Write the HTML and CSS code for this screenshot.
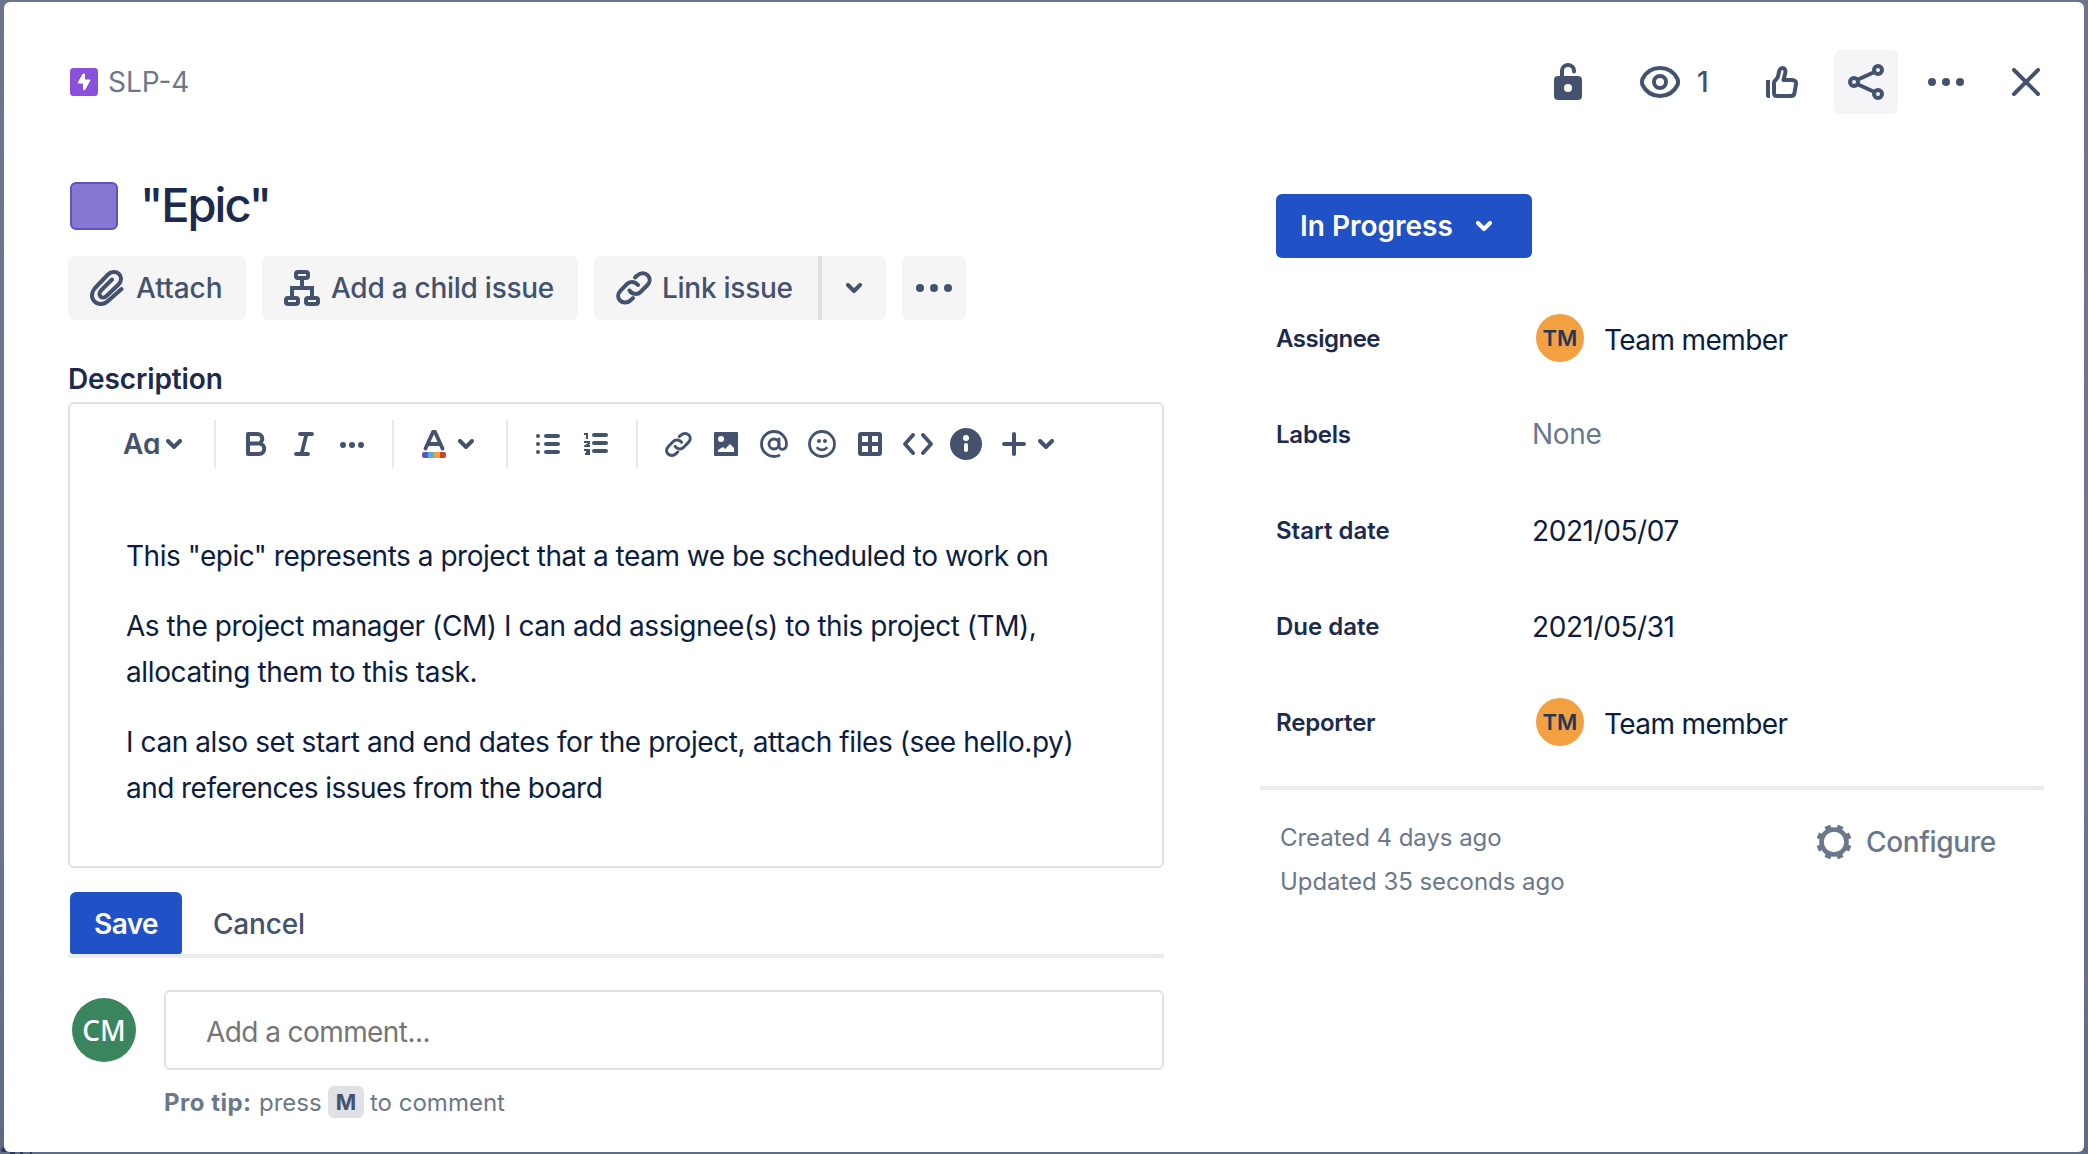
FILE: index.html
```html
<!DOCTYPE html>
<html lang="en">
<head>
<meta charset="utf-8">
<title>SLP-4</title>
<link rel="stylesheet" href="styles.css">
</head>
<body>
<svg width="0" height="0" class="sprite">
  <symbol id="chevron" viewBox="0 0 16 10"><path d="M2 2l6 6 6-6" fill="none" stroke="currentColor" stroke-width="4" stroke-linecap="round" stroke-linejoin="round"/></symbol>
  <symbol id="dots" viewBox="0 0 36 8"><g fill="currentColor"><circle cx="4" cy="4" r="4"/><circle cx="18" cy="4" r="4"/><circle cx="32" cy="4" r="4"/></g></symbol>
  <symbol id="link" viewBox="0 0 36 34"><g fill="none" stroke="currentColor" stroke-width="4" stroke-linecap="round" stroke-linejoin="round"><path d="M13.500 19.500c2.800 4 8 4.500 11 1.500l6.500-6.500c3.400-3.400 3.400-7.500.8-10.200s-7.500-2.800-10.300 0L19 6.500"/><path d="M22 14c-3-3.500-8-4-11-1l-6.200 6.300c-3.400 3.400-3.400 7.500-.8 10.200s7.500 2.800 10.300 0L17 27"/></g></symbol>
</svg>
<svg class="behind" width="36" height="8" viewBox="0 0 36 8"><path d="M1 5c0-4 4-5 6-2l-1 3H3zM10 8V6h5v2zM20 8V6h3v2zM30 6h2v2h-2z" fill="#2b3a5c"/></svg>
<main class="dialog">
  <header class="topbar">
    <div class="crumb">
      <svg width="28" height="28" viewBox="0 0 28 28"><rect width="28" height="28" rx="3.500" fill="#8a50dc"/><path d="M13 6L8 15h5.500v7l1.500-.6L20 12h-5.500V6z" fill="#fff" stroke="#fff" stroke-linejoin="round"/></svg>
      <span class="key">SLP-4</span>
    </div>
    <div class="tools">
      <svg class="lock" width="28" height="38" viewBox="0 0 28 38"><path d="M8 16V9a6 6 0 0 1 12 0v.5" fill="none" stroke="currentColor" stroke-width="4" stroke-linecap="round"/><path fill-rule="evenodd" fill="currentColor" d="M4 14h20a4 4 0 0 1 4 4v16a4 4 0 0 1-4 4H4a4 4 0 0 1-4-4V18a4 4 0 0 1 4-4zm10 8a4 4 0 1 0 0 8 4 4 0 0 0 0-8z"/></svg>
      <svg class="eye" width="40" height="32" viewBox="0 0 40 32"><g fill="none" stroke="currentColor" stroke-width="4"><path d="M20 2c8 0 14 4 17.500 11 .7 2 .7 4 0 6C34 26 28 30 20 30S6 26 2.500 19c-.7-2-.7-4 0-6C6 6 12 2 20 2z"/><circle cx="20" cy="16" r="6"/></g></svg>
      <span class="watchers">1</span>
      <svg class="thumb" width="32" height="32" viewBox="0 0 32 32"><path d="M0 14h4v18H2.500A2.500 2.500 0 0 1 0 29.500z" fill="currentColor"/><path d="M8 16.500c0-1.500 4-3.500 4.500-8C13 4 14 2 16.500 2S20 4.500 19 8l-1.500 6H26c3 0 4.300 1.500 4 4l-1.500 9c-.4 2-1.500 3-3.500 3H11c-2 0-3-1-3-3z" fill="none" stroke="currentColor" stroke-width="4" stroke-linejoin="round"/></svg>
      <div class="share"><svg width="36" height="36" viewBox="0 0 36 36"><g fill="none" stroke="currentColor" stroke-width="4"><circle cx="6" cy="18" r="4"/><circle cx="30" cy="6" r="4"/><circle cx="30" cy="30" r="4"/><path d="M9 16L26.500 8M9 20l17.500 8"/></g></svg></div>
      <svg class="more" width="36" height="8"><use href="#dots"/></svg>
      <svg class="close" width="28" height="28" viewBox="0 0 28 28"><path d="M2 2l24 24M26 2L2 26" stroke="currentColor" stroke-width="4" stroke-linecap="round"/></svg>
    </div>
  </header>
  <div class="columns">
    <section class="left">
      <div class="title-row"><span class="swatch"></span><h1>"Epic"</h1></div>
      <div class="actions">
        <div class="btn attach"><svg width="34" height="36" viewBox="0 0 34 36"><path d="M31.500 19L18 31c-4 4-10 4-13.500.5s-3.500-9 .5-13.500L18 4.500c3-3 8-3.300 11-.5s2.500 7.500-.5 10.500L16.500 26c-1.800 1.800-4.500 2-6 .5s-1.300-4 .5-6L22 9.500" fill="none" stroke="currentColor" stroke-width="4" stroke-linecap="round" stroke-linejoin="round"/></svg><span>Attach</span></div>
        <div class="btn child"><svg width="36" height="36" viewBox="0 0 36 36"><g fill="none" stroke="currentColor" stroke-width="4"><rect x="12" y="2" width="12" height="6" rx="2"/><rect x="2" y="28" width="12" height="6" rx="2"/><rect x="22" y="28" width="12" height="6" rx="2"/><path d="M18 9v9M8 27v-9h20v9"/></g></svg><span>Add a child issue</span></div>
        <div class="btn linkbtn"><svg width="36" height="34"><use href="#link"/></svg><span>Link issue</span></div>
        <div class="btn linkmore"><svg width="16" height="10"><use href="#chevron"/></svg></div>
        <div class="btn morebtn"><svg width="36" height="8"><use href="#dots"/></svg></div>
      </div>
      <h2>Description</h2>
      <div class="editor">
        <div class="toolbar">
          <div class="grp g1"><span class="aa">Aa</span><svg width="16" height="10"><use href="#chevron"/></svg></div>
          <div class="grp g2">
            <svg width="20" height="24" viewBox="0 0 20 24"><path d="M2 2h9.500a4.800 4.800 0 0 1 0 9.600H2zM2 11.600h11a5.200 5.200 0 0 1 0 10.400H2z" fill="none" stroke="currentColor" stroke-width="4" stroke-linejoin="round"/></svg>
            <svg width="20" height="24" viewBox="0 0 20 24"><path d="M6 2h12M2 22h12M12.500 2l-5 20" fill="none" stroke="currentColor" stroke-width="3.800" stroke-linecap="round"/></svg>
            <svg class="sdots" width="24" height="6" viewBox="0 0 24 6"><g fill="currentColor"><circle cx="3" cy="3" r="3"/><circle cx="12" cy="3" r="3"/><circle cx="21" cy="3" r="3"/></g></svg>
          </div>
          <div class="grp g3">
            <svg width="24" height="28" viewBox="0 0 24 28"><path d="M3.500 18.500L11 2h2l7.500 16.500M7 14h10" fill="none" stroke="currentColor" stroke-width="3.800" stroke-linecap="round" stroke-linejoin="round"/><path d="M2 22h4v6H2a2 2 0 0 1-2-2v-2a2 2 0 0 1 2-2z" fill="#6554c0"/><path d="M6 22h6v6H6z" fill="#4fb3d9"/><path d="M12 22h6v6h-6z" fill="#f2a042"/><path d="M18 22h4a2 2 0 0 1 2 2v2a2 2 0 0 1-2 2h-4z" fill="#d04423"/></svg>
            <svg width="16" height="10"><use href="#chevron"/></svg>
          </div>
          <div class="grp g4">
            <svg width="24" height="20" viewBox="0 0 24 20"><g stroke="currentColor" stroke-width="4" stroke-linecap="round"><path d="M10 2h12M10 10h12M10 18h12M2 2h0M2 10h0M2 18h0"/></g></svg>
            <svg width="24" height="22" viewBox="0 0 24 22"><path d="M10 2h12M10 10h12M10 18h12" stroke="currentColor" stroke-width="4" stroke-linecap="round"/><path d="M0 1h3v5M0 9h5v1.500L1.500 13H6M0 17h5v4H1M2 19h3" fill="none" stroke="currentColor" stroke-width="2"/></svg>
          </div>
          <div class="grp g5">
            <svg width="27" height="27" viewBox="0 0 36 34"><use href="#link"/></svg>
            <svg width="24" height="24" viewBox="0 0 24 24"><path fill="currentColor" fill-rule="evenodd" d="M1 0h22a1 1 0 0 1 1 1v22a1 1 0 0 1-1 1H1a1 1 0 0 1-1-1V1a1 1 0 0 1 1-1zm6 4a3 3 0 1 0 0 6 3 3 0 0 0 0-6zM4 20h16v-4l-4-4-5 5-2-2-5 3z"/></svg>
            <svg width="28" height="28" viewBox="0 0 28 28"><g fill="none" stroke="currentColor" stroke-width="2.800" stroke-linecap="round"><circle cx="14" cy="14" r="5"/><path d="M19 9v7c0 5 7.500 4.500 7.500-2A12.500 12.500 0 1 0 14 26.500c2 0 3.500-.4 5-1"/></g></svg>
            <svg width="28" height="28" viewBox="0 0 28 28"><g fill="none" stroke="currentColor" stroke-width="2.800" stroke-linecap="round"><circle cx="14" cy="14" r="12.500"/><path d="M9.500 18c2 2.500 7 2.500 9 0"/></g><circle cx="11" cy="11" r="2" fill="currentColor"/><circle cx="17" cy="11" r="2" fill="currentColor"/></svg>
            <svg width="24" height="24" viewBox="0 0 24 24"><path fill="currentColor" fill-rule="evenodd" d="M3 0h18a3 3 0 0 1 3 3v18a3 3 0 0 1-3 3H3a3 3 0 0 1-3-3V3a3 3 0 0 1 3-3zm1 4v6h6V4zm10 0v6h6V4zM4 14v6h6v-6zm10 0v6h6v-6z"/></svg>
            <svg width="30" height="22" viewBox="0 0 30 22"><path d="M10 2l-8 9 8 9M20 2l8 9-8 9" fill="none" stroke="currentColor" stroke-width="3.800" stroke-linecap="round" stroke-linejoin="round"/></svg>
            <svg width="32" height="32" viewBox="0 0 32 32"><circle cx="16" cy="16" r="16" fill="currentColor"/><circle cx="16" cy="10" r="3" fill="#fff"/><path d="M16 17v5" stroke="#fff" stroke-width="4" stroke-linecap="round"/></svg>
            <svg width="24" height="24" viewBox="0 0 24 24"><path d="M12 2v20M2 12h20" stroke="currentColor" stroke-width="4" stroke-linecap="round"/></svg>
            <svg width="16" height="10"><use href="#chevron"/></svg>
          </div>
        </div>
        <div class="doc">
          <p><span class="d1">This "epic" represents a project that a team we be scheduled to work on</span></p>
          <p><span class="d2">As the project manager (CM) I can add assignee(s) to this project (TM),</span><br><span class="d3">allocating them to this task.</span></p>
          <p><span class="d4">I can also set start and end dates for the project, attach files (see hello.py)</span><br><span class="d5">and references issues from the board</span></p>
        </div>
      </div>
      <div class="save-row"><div class="save"><span>Save</span></div><span class="cancel">Cancel</span></div>
      <div class="comment">
        <span class="avatar cm">CM</span>
        <div class="cbody">
          <div class="input"><span>Add a comment...</span></div>
          <div class="tip"><b>Pro tip:</b><span class="press">press</span><kbd>M</kbd><span>to comment</span></div>
        </div>
      </div>
    </section>
    <aside class="right">
      <div class="status"><span>In Progress</span><svg width="16" height="10"><use href="#chevron"/></svg></div>
      <dl>
        <div class="row"><dt class="l1">Assignee</dt><dd><span class="avatar tm">TM</span><span class="person">Team member</span></dd></div>
        <div class="row"><dt class="l2">Labels</dt><dd class="none">None</dd></div>
        <div class="row"><dt>Start date</dt><dd class="date">2021/05/07</dd></div>
        <div class="row"><dt>Due date</dt><dd class="date">2021/05/31</dd></div>
        <div class="row"><dt class="l5">Reporter</dt><dd><span class="avatar tm">TM</span><span class="person">Team member</span></dd></div>
      </dl>
      <div class="foot">
        <div class="stamps"><div>Created 4 days ago</div><div>Updated 35 seconds ago</div></div>
        <div class="configure"><svg width="36" height="36" viewBox="0 0 36 36"><circle cx="18" cy="18" r="12.500" fill="none" stroke="currentColor" stroke-width="4.600"/><g transform="rotate(22.500 18 18)" stroke="currentColor" stroke-width="6" stroke-linejoin="round"><path d="M18 .5v5M18 30.500v5M.5 18h5M30.500 18h5M5.600 5.600l3.600 3.600M26.800 26.800l3.600 3.600M5.600 30.400l3.600-3.600M26.800 9.200l3.600-3.600"/></g></svg><span>Configure</span></div>
      </div>
    </aside>
  </div>
</main>
</body>
</html>
```
FILE: styles.css
```css
* { box-sizing: border-box; }
body { margin: 0; width: 2088px; height: 1154px; padding: 2px 4px; background: linear-gradient(#6b748b 0, #6f7890 60%, #5f6a84 100%); font-family: Inter, "Liberation Sans", sans-serif; font-size: 28px; color: #0c1d42; overflow: hidden; }
.sprite { position: absolute; }
.behind { position: absolute; left: 0; bottom: 0; }
svg { display: block; flex: none; }
span, b, dt, dd, h1, h2, kbd { white-space: nowrap; }
.dialog { position: relative; width: 2080px; height: 1150px; background: #fff; border-radius: 6px; }
.topbar { height: 160px; padding: 48px 44px 0 66px; display: flex; justify-content: space-between; color: #44526d; }
.crumb { display: flex; align-items: center; gap: 10px; height: 64px; }
.key { color: #6b778c; }
.tools { display: flex; align-items: center; height: 64px; }
.lock { margin: -2px 58px 0 0; }
.eye { margin-right: 17px; }
.watchers { width: 15px; margin-right: 54px; font-weight: 500; }
.share { width: 64px; height: 64px; margin: 0 30px 0 36px; border-radius: 6px; background: #f5f5f7; display: grid; place-items: center; }
.more { margin-right: 48px; }
.columns { display: flex; }
.left { width: 1096px; margin-left: 64px; }
.title-row { display: flex; align-items: center; height: 88px; gap: 22px; padding-left: 2px; }
.swatch { width: 48px; height: 48px; border: 2px solid #6251c4; border-radius: 6px; background: #8677d0; }
h1 { margin: -4px 0 0; font-size: 47px; font-weight: 500; color: #1b2a4e; letter-spacing: -2px; }
.actions { display: flex; margin-top: 6px; color: #44526d; font-weight: 500; }
.btn { height: 64px; background: #f5f5f6; border-radius: 6px; display: flex; align-items: center; }
.attach { width: 178px; margin-right: 16px; padding-left: 22px; gap: 12px; }
.child { width: 316px; margin-right: 16px; padding-left: 22px; gap: 11px; letter-spacing: -.26px; }
.linkbtn { width: 224px; padding-left: 22px; gap: 10px; border-radius: 6px 0 0 6px; letter-spacing: -.26px; }
.linkmore { width: 68px; margin-right: 16px; border-left: 4px solid #dfe1e6; border-radius: 0 6px 6px 0; justify-content: center; }
.morebtn { width: 64px; justify-content: center; }
h2 { margin: 36px 0 0; height: 46px; line-height: 46px; font-size: 28px; font-weight: 600; color: #1b2a4e; letter-spacing: -.12px; }
.editor { height: 466px; border: 2px solid #dfe0e6; border-radius: 6px; }
.toolbar { display: flex; height: 48px; margin-top: 16px; color: #44526d; }
.grp { display: flex; align-items: center; border-right: 2px solid #e8e9ee; height: 48px; }
.g1 { width: 146px; padding-left: 53px; gap: 5px; }
.aa { width: 38px; font-weight: 600; font-feature-settings: "cv11"; }
.g2 { width: 178px; padding-left: 30px; }
.g2 svg { margin-right: 28px; }
.g2 .sdots { margin: 2px 0 0 -2px; }
.g3 { width: 114px; padding-left: 28px; gap: 12px; }
.g4 { width: 130px; padding-left: 28px; gap: 24px; }
.g5 { border: 0; padding-left: 27px; }
.g5 svg:nth-child(1) { margin-right: 22px; }
.g5 svg:nth-child(2) { margin-right: 22px; }
.g5 svg:nth-child(3) { margin-right: 20px; }
.g5 svg:nth-child(4) { margin-right: 22px; }
.g5 svg:nth-child(5) { margin-right: 21px; }
.g5 svg:nth-child(6) { margin-right: 17px; }
.g5 svg:nth-child(7) { margin-right: 20px; }
.g5 svg:nth-child(8) { margin-right: 12px; }
.doc { padding: 65px 0 0 56px; line-height: 46px; }
.d1 { letter-spacing: -.47px; }
.d2 { letter-spacing: -.45px; }
.d3 { letter-spacing: -.37px; }
.d4 { letter-spacing: -.42px; }
.d5 { letter-spacing: -.55px; }
p { margin: 0 0 24px; }
.save-row { height: 66px; margin-top: 24px; border-bottom: 4px solid #ebecf0; display: flex; align-items: center; font-weight: 500; }
.save { width: 112px; height: 62px; padding-top: 2px; margin-left: 2px; background: #2151c6; color: #fff; border-radius: 6px 6px 3px 3px; display: grid; place-items: center; font-weight: 600; letter-spacing: -.6px; }
.cancel { margin-left: 31px; padding-top: 2px; color: #44526d; letter-spacing: -.2px; }
.comment { display: flex; margin-top: 32px; }
.avatar { border-radius: 50%; display: grid; place-items: center; }
.cm { width: 64px; height: 64px; margin: 8px 28px 0 4px; background: #3a855e; color: #fff; font: 500 28px "Noto Sans", sans-serif; }
.cbody { width: 1000px; }
.input { height: 80px; border: 2px solid #dfe0e6; border-radius: 6px; padding: 3px 0 0 40px; display: flex; align-items: center; color: #757575; letter-spacing: -.58px; }
.tip { display: flex; align-items: center; margin-top: 16px; height: 32px; font-size: 24px; color: #6b778c; }
.tip b { font-weight: 700; width: 95px; letter-spacing: .5px; }
.press { width: 69px; }
kbd { width: 36px; height: 32px; margin-right: 6px; border-radius: 6px; background: #dfe1e6; color: #44526d; font: 700 22px Inter, sans-serif; display: grid; place-items: center; }
.right { width: 784px; margin-left: 96px; padding-top: 32px; }
.status { width: 256px; height: 64px; margin-left: 16px; padding-left: 24px; background: #2151c6; color: #fff; border-radius: 6px; display: flex; align-items: center; font-weight: 600; }
.status span { width: 176px; }
dl { margin: 32px 0 0; padding-left: 16px; }
.row { display: flex; align-items: center; height: 96px; }
dt { width: 256px; font-size: 24px; font-weight: 600; color: #1b2a4e; }
.l1 { letter-spacing: -.5px; }
.l2, .l5 { letter-spacing: -.2px; }
dd { margin: 4px 0 0; display: flex; align-items: center; }
.none { margin-top: 0; color: #6b778c; letter-spacing: -.3px; }
.date { margin-top: 1px; letter-spacing: -.42px; }
.person { letter-spacing: -.6px; }
.tm { width: 48px; height: 48px; margin: -4px 20px 0 4px; background: #f2a042; color: #253858; font-size: 22px; font-weight: 600; }
.foot { margin-top: 16px; border-top: 4px solid #ebecf0; padding: 26px 0 0 20px; display: flex; color: #6b778c; }
.stamps { width: 536px; font-size: 24px; line-height: 44px; letter-spacing: -.05px; }
.configure { display: flex; align-items: center; height: 52px; gap: 14px; font-weight: 500; letter-spacing: -.35px; }
```
